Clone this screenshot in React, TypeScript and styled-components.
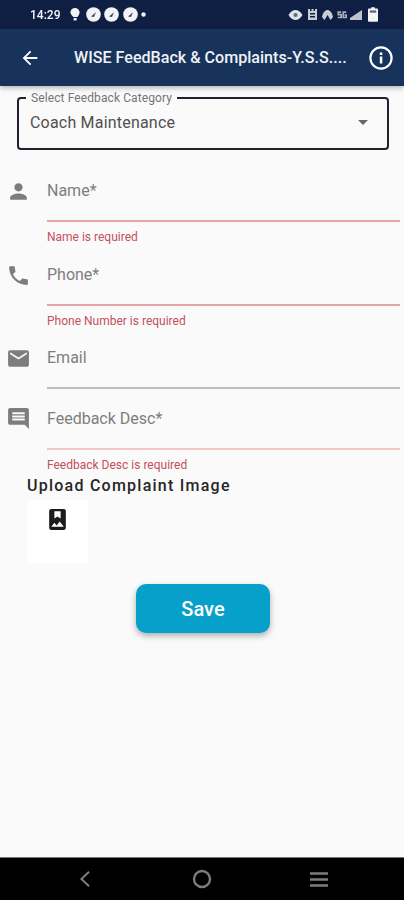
import React from "react";
import styled, { createGlobalStyle } from "styled-components";

const Global = createGlobalStyle`
  html, body { margin: 0; padding: 0; background: #fafafa; }
  body { font-family: Roboto, "Liberation Sans", sans-serif; }
  * { box-sizing: border-box; }
`;

const Page = styled.div`
  width: 404px;
  height: 900px;
  display: flex;
  flex-direction: column;
  background: #fafafa;
  overflow: hidden;
`;

const StatusBar = styled.div`
  height: 29px;
  flex: none;
  background: #0f1f43;
  display: flex;
  align-items: center;
  justify-content: space-between;
  padding: 0 26px 0 30px;
  color: #f4f6fa;
`;

const StatusGroup = styled.div`
  display: flex;
  align-items: center;
`;

const Spacer = styled.span<{ $w: number }>`
  width: ${(p) => p.$w}px;
  flex: none;
`;

const Time = styled.span`
  font-size: 12px;
  font-weight: 500;
  filter: blur(0.3px);
`;

const AppBar = styled.header`
  height: 57px;
  flex: none;
  background: #17335b;
  display: flex;
  align-items: center;
  padding: 0 10px 0 19px;
  color: #fff;
  box-shadow: 0 2px 5px rgba(0, 0, 0, 0.28);
  position: relative;
  z-index: 1;
`;

const Title = styled.h1`
  flex: 1;
  margin: 0 0 0 33px;
  font-size: 16.1px;
  font-weight: 500;
  white-space: nowrap;
  color: #eef1f5;
`;

const Form = styled.main`
  flex: 1;
  display: flex;
  flex-direction: column;
  padding-top: 11px;
`;

const SelectBox = styled.div`
  position: relative;
  height: 53px;
  margin: 0 15px 0 17px;
  border: 2px solid #20222e;
  border-radius: 4px;
  display: flex;
  align-items: center;
  justify-content: space-between;
  padding: 0 19px 3px 11px;
  font-size: 16px;
  color: #505050;
  letter-spacing: 0.2px;
`;

const SelectLabel = styled.span`
  position: absolute;
  left: 7px;
  top: -8px;
  padding: 0 5px;
  background: #fafafa;
  font-size: 12px;
  line-height: 14px;
  color: #757575;
  letter-spacing: 0.1px;
`;

const Caret = styled.span`
  width: 0;
  height: 0;
  border-left: 5px solid transparent;
  border-right: 5px solid transparent;
  border-top: 5px solid #666;
`;

const Fields = styled.div`
  margin-top: 11px;
  display: flex;
  flex-direction: column;
`;

const FieldRow = styled.div`
  display: grid;
  grid-template-columns: 47px 1fr;
  padding-right: 4px;
`;

const IconCell = styled.div<{ $height: number }>`
  height: ${(p) => p.$height}px;
  display: flex;
  align-items: center;
  padding-left: 6px;
  color: #7d7d7d;
`;

const InputArea = styled.div<{ $line: string; $height: number; $lift: number }>`
  height: ${(p) => p.$height}px;
  display: flex;
  align-items: center;
  border-bottom: 2px solid ${(p) => p.$line};
  padding-bottom: ${(p) => p.$lift}px;
  font-size: 16px;
  color: #7e7e7e;
`;

const Helper = styled.div`
  height: 23px;
  padding-top: 8px;
  font-size: 12px;
  line-height: 14px;
  color: #c4505a;
`;

const Upload = styled.section`
  margin: 3px 0 0 27px;
`;

const UploadTitle = styled.div`
  font-size: 16px;
  line-height: 20px;
  font-weight: 500;
  letter-spacing: 1.24px;
  color: #262626;
`;

const UploadBox = styled.div`
  width: 61px;
  height: 63px;
  margin-top: 4px;
  background: #fff;
  display: flex;
  justify-content: center;
  align-items: flex-start;
  padding-top: 7px;
  color: #1c1c1c;
`;

const SaveButton = styled.button`
  align-self: flex-start;
  margin: 21px 0 0 136px;
  width: 134px;
  height: 49px;
  border: 0;
  border-radius: 10px;
  background: #06a0ca;
  color: #fff;
  font-family: inherit;
  font-size: 20px;
  font-weight: 500;
  box-shadow: 0 3px 6px rgba(0, 0, 0, 0.3);
`;

const NavBar = styled.nav`
  height: 43px;
  flex: none;
  background: #000;
  border-top: 1px solid #777;
  display: grid;
  grid-template-columns: repeat(3, 117px);
  justify-content: center;
  align-items: center;
  justify-items: center;
  color: #7c7c7c;
`;

const Icon = ({ d, size = 24 }: { d: string; size?: number }) => (
  <svg width={size} height={size} viewBox="0 0 24 24" fill="currentColor">
    <path d={d} />
  </svg>
);

const paths = {
  person: "M12 12c2.21 0 4-1.79 4-4s-1.79-4-4-4-4 1.79-4 4 1.79 4 4 4zm0 2c-2.67 0-8 1.34-8 4v2h16v-2c0-2.66-5.33-4-8-4z",
  phone: "M6.62 10.79c1.44 2.83 3.76 5.14 6.59 6.59l2.2-2.2c.27-.27.67-.36 1.02-.24 1.12.37 2.33.57 3.57.57.55 0 1 .45 1 1V20c0 .55-.45 1-1 1-9.39 0-17-7.61-17-17 0-.55.45-1 1-1h3.5c.55 0 1 .45 1 1 0 1.25.2 2.45.57 3.57.11.35.03.74-.25 1.02l-2.2 2.2z",
  email: "M20 4H4c-1.1 0-1.99.9-1.99 2L2 18c0 1.1.9 2 2 2h16c1.1 0 2-.9 2-2V6c0-1.1-.9-2-2-2zm0 4l-8 5-8-5V6l8 5 8-5v2z",
  comment: "M21.99 4c0-1.1-.89-2-1.99-2H4c-1.1 0-2 .9-2 2v12c0 1.1.9 2 2 2h14l4 4-.01-18zM18 14H6v-2h12v2zm0-3H6V9h12v2zm0-3H6V6h12v2z",
  album: "M18 2H6c-1.1 0-2 .9-2 2v16c0 1.1.9 2 2 2h12c1.1 0 2-.9 2-2V4c0-1.1-.9-2-2-2zM9 4h6v7l-3-1.8L9 11V4zM6 19l3-3.86 2.14 2.58 3-3.86L18 19H6z",
  back: "M20 11H7.83l5.59-5.59L12 4l-8 8 8 8 1.41-1.41L7.83 13H20v-2z",
};

const CheckDot = () => (
  <svg width="15" height="15" viewBox="0 0 15 15">
    <circle cx="7.5" cy="7.5" r="7.3" fill="#f2f3f6" />
    <path d="M5 9.5 L10 5.2 L8 10 Z" fill="#3a4560" />
  </svg>
);

type FieldProps = {
  icon: string;
  label: string;
  line: string;
  error?: string;
  height?: number;
  lift?: number;
  iconHeight?: number;
};

const Field = ({ icon, label, line, error, height = 61, lift = 1, iconHeight = 60 }: FieldProps) => (
  <FieldRow>
    <IconCell $height={iconHeight}>
      <Icon d={icon} size={25} />
    </IconCell>
    <div>
      <InputArea $line={line} $height={height} $lift={lift}>
        {label}
      </InputArea>
      {error && <Helper>{error}</Helper>}
    </div>
  </FieldRow>
);

export default function App() {
  return (
    <Page>
      <Global />
      <StatusBar>
        <StatusGroup>
          <Time>14:29</Time>
          <Spacer $w={10} />
          <svg width="10" height="13" viewBox="0 0 10 13" fill="#f2f3f6">
            <path d="M5 0a4.6 4.6 0 0 1 4.6 4.6c0 2-1.4 3-2 4.4H3.2C2.6 7.6.4 6.6.4 4.6A4.6 4.6 0 0 1 5 0zM3.6 10h3v2.400h-3z" />
          </svg>
          <Spacer $w={6} />
          <CheckDot />
          <Spacer $w={3} />
          <CheckDot />
          <Spacer $w={4} />
          <CheckDot />
          <Spacer $w={3} />
          <svg width="5" height="5" viewBox="0 0 5 5">
            <circle cx="2.5" cy="2.5" r="2.2" fill="#f2f3f6" />
          </svg>
        </StatusGroup>
        <StatusGroup>
          <svg width="15" height="10" viewBox="0 0 14 10" fill="#dfe2e9">
            <path d="M0 5C2 1.500 4.500 0 7 0s5 1.500 7 5c-2 3.500-4.500 5-7 5S2 8.500 0 5z" />
            <circle cx="7" cy="5" r="2" fill="#5c6880" />
          </svg>
          <Spacer $w={5} />
          <svg width="9" height="11" viewBox="0 0 9 11" fill="#c8ccd6">
            <path d="M0 0h2v2h1.500V0h2v2H7V0h2v11H0zM2 4v1.500h5V4zm0 3v1.500h5V7z" />
          </svg>
          <Spacer $w={5} />
          <svg width="11" height="10" viewBox="0 0 11 10" fill="#c8ccd6">
            <path d="M0 7C1 2 3.500 0 5.500 0S10 2 11 7L8.500 10 5.500 5 2.500 10z" />
          </svg>
          <Spacer $w={4} />
          <svg width="10" height="8" viewBox="0 0 12 9" fill="none" stroke="#a9aebb" strokeWidth="2">
            <path d="M5 1H1.500v3H5v3.500H1M11 1H7.500v6.500H11V4.500H9" />
          </svg>
          <Spacer $w={3} />
          <svg width="12" height="10" viewBox="0 0 12 10" fill="#bfc3ce">
            <path d="M0 10V8l12-8v10z" />
          </svg>
          <Spacer $w={6} />
          <svg width="10" height="15" viewBox="0 0 11 16">
            <path d="M3.500 0h4v1.500H10a1 1 0 0 1 1 1V15a1 1 0 0 1-1 1H1a1 1 0 0 1-1-1V2.500a1 1 0 0 1 1-1h2.500z" fill="#f2f3f6" />
            <rect x="2" y="3.500" width="7" height="2.500" fill="#5c6780" />
          </svg>
        </StatusGroup>
      </StatusBar>
      <AppBar>
        <Icon d={paths.back} size={22} />
        <Title>WISE FeedBack &amp; Complaints-Y.S.S....</Title>
        <svg width="26" height="26" viewBox="0 0 26 26" fill="none">
          <circle cx="13" cy="13" r="10.6" stroke="#fff" strokeWidth="2.200" />
          <rect x="11.800" y="11.500" width="2.500" height="7" fill="#fff" />
          <rect x="11.800" y="7.500" width="2.500" height="2.500" fill="#fff" />
        </svg>
      </AppBar>
      <Form>
        <SelectBox>
          <SelectLabel>Select Feedback Category</SelectLabel>
          Coach Maintenance
          <Caret />
        </SelectBox>
        <Fields>
          <Field icon={paths.person} label="Name*" line="#e5a7a5" error="Name is required" />
          <Field icon={paths.phone} label="Phone*" line="#e5a7a5" error="Phone Number is required" />
          <Field icon={paths.email} label="Email" line="#bdbdbd" height={60} iconHeight={58} />
          <Field icon={paths.comment} label="Feedback Desc*" line="#f3c6c6" error="Feedback Desc is required" lift={0} iconHeight={58} />
        </Fields>
        <Upload>
          <UploadTitle>Upload Complaint Image</UploadTitle>
          <UploadBox>
            <Icon d={paths.album} size={25} />
          </UploadBox>
        </Upload>
        <SaveButton>Save</SaveButton>
      </Form>
      <NavBar>
        <svg width="16" height="18" viewBox="0 0 16 20" fill="none" stroke="currentColor" strokeWidth="2.200">
          <path d="M12.500 2 L4 10 L12.500 18" />
        </svg>
        <svg width="20" height="20" viewBox="0 0 20 20" fill="none" stroke="currentColor" strokeWidth="2.400">
          <circle cx="10" cy="10" r="8" />
        </svg>
        <svg width="18" height="15" viewBox="0 0 18 15" fill="none" stroke="currentColor" strokeWidth="2.400">
          <path d="M0 1.500h18M0 7.500h18M0 13.500h18" />
        </svg>
      </NavBar>
    </Page>
  );
}
